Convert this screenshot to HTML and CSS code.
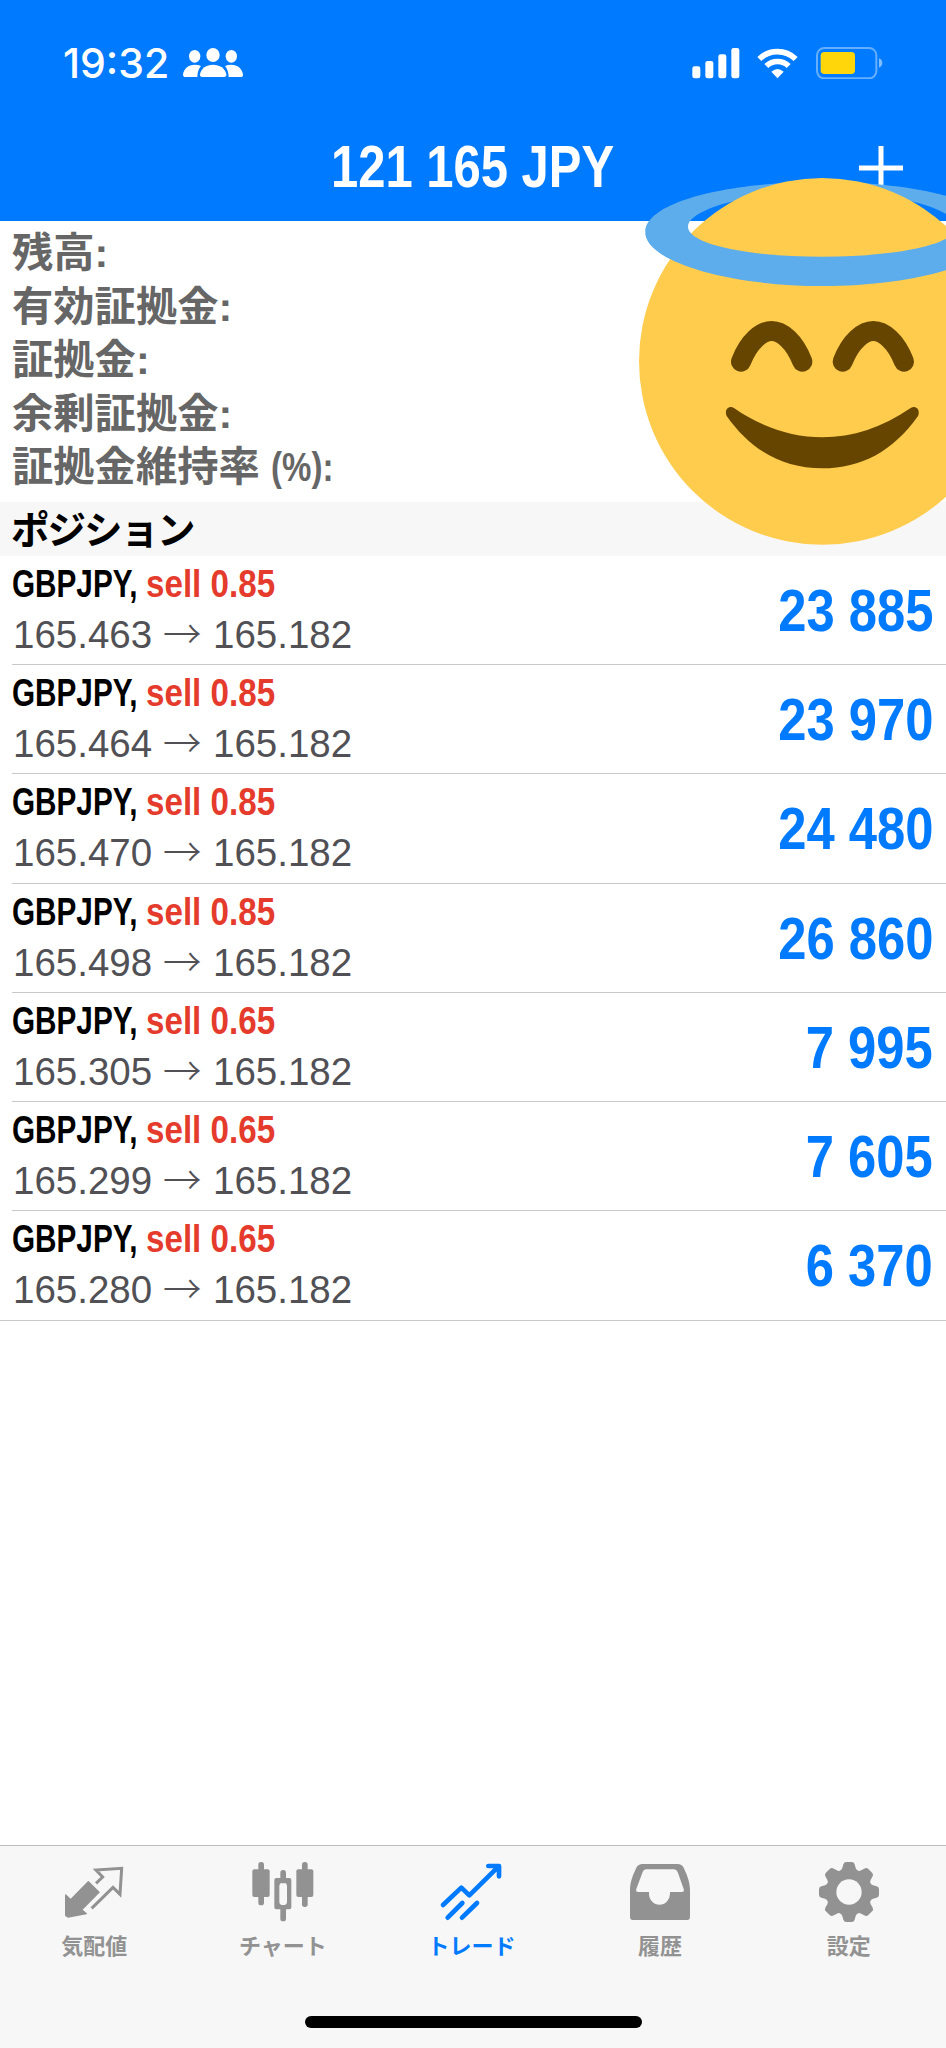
FILE: index.html
```html
<!DOCTYPE html>
<html lang="ja">
<head>
    <meta charset="UTF-8">
    <meta name="viewport" content="width=device-width, initial-scale=1.0">
    <title>トレード</title>
    <link rel="stylesheet" href="styles.css">
</head>
<body>
    <header class="header">
        <div class="status-bar">
            <span class="time">19:32</span>
            <svg class="people" width="61" height="30" viewBox="0 0 183 90" fill="#fff">
                <ellipse cx="35" cy="25" rx="17" ry="19"/>
                <ellipse cx="145" cy="25" rx="17" ry="19"/>
                <ellipse cx="90" cy="21" rx="20" ry="21"/>
                <path d="M8 87Q0 87 0 80C2 62 16 50 35 50Q46 50 54 54Q44 65 43 87Z"/>
                <path d="M172 87Q181 87 180 80C178 62 164 50 145 50Q134 50 126 54Q136 65 137 87Z"/>
                <path d="M58 87Q50 87 51 79C54 61 70 50 90 50S127 61 130 79Q131 87 123 87Z"/>
            </svg>
            <svg class="signal" width="48" height="31" viewBox="0 0 144 93" fill="#fff">
                <rect x="1" y="55" width="24" height="36" rx="7"/>
                <rect x="40" y="39" width="24" height="52" rx="7"/>
                <rect x="79" y="19" width="24" height="72" rx="7"/>
                <rect x="118" y="0" width="24" height="91" rx="7"/>
            </svg>
            <svg class="wifi" width="41" height="31" viewBox="0 0 123 93" fill="none" stroke="#fff" stroke-width="17">
                <path d="M7 33A78 78 0 0 1 116 33"/>
                <path d="M28 54A48 48 0 0 1 95 54"/>
                <path d="M61.500 91L43 71Q61.500 55 80 71Z" fill="#fff" stroke="none"/>
            </svg>
            <svg class="battery" width="67" height="32" viewBox="0 0 201 96">
                <rect x="3" y="3" width="178" height="91" rx="22" fill="none" stroke="#fff" stroke-opacity=".4" stroke-width="6"/>
                <rect x="14" y="15" width="103" height="66" rx="11" fill="#ffd60a"/>
                <path d="M189 34Q199 38 199 48T189 62Z" fill="#fff" fill-opacity=".5"/>
            </svg>
        </div>
        <div class="title-bar">
            <h1 class="title"><span>121 165 JPY</span></h1>
            <svg class="plus" width="44" height="44" viewBox="0 0 44 44" stroke="#fff" stroke-width="5">
                <path d="M0 22H44M22 0V44"/>
            </svg>
        </div>
    </header>

    <section class="account">
        <p>残高:</p>
        <p>有効証拠金:</p>
        <p>証拠金:</p>
        <p>余剰証拠金:</p>
        <p>証拠金維持率 <span class="percent">(%):</span></p>
    </section>

    <h2 class="section-title">ポジション</h2>

    <main class="positions">
        <div class="position">
            <div class="info">
                <div class="deal"><span class="symbol">GBPJPY,</span><span class="side">sell 0.85</span></div>
                <div class="prices"><span class="open">165.463</span><span class="arrow">→</span><span>165.182</span></div>
            </div>
            <div class="profit">23 885</div>
        </div>
        <div class="position">
            <div class="info">
                <div class="deal"><span class="symbol">GBPJPY,</span><span class="side">sell 0.85</span></div>
                <div class="prices"><span class="open">165.464</span><span class="arrow">→</span><span>165.182</span></div>
            </div>
            <div class="profit">23 970</div>
        </div>
        <div class="position">
            <div class="info">
                <div class="deal"><span class="symbol">GBPJPY,</span><span class="side">sell 0.85</span></div>
                <div class="prices"><span class="open">165.470</span><span class="arrow">→</span><span>165.182</span></div>
            </div>
            <div class="profit">24 480</div>
        </div>
        <div class="position">
            <div class="info">
                <div class="deal"><span class="symbol">GBPJPY,</span><span class="side">sell 0.85</span></div>
                <div class="prices"><span class="open">165.498</span><span class="arrow">→</span><span>165.182</span></div>
            </div>
            <div class="profit">26 860</div>
        </div>
        <div class="position">
            <div class="info">
                <div class="deal"><span class="symbol">GBPJPY,</span><span class="side">sell 0.65</span></div>
                <div class="prices"><span class="open">165.305</span><span class="arrow">→</span><span>165.182</span></div>
            </div>
            <div class="profit">7 995</div>
        </div>
        <div class="position">
            <div class="info">
                <div class="deal"><span class="symbol">GBPJPY,</span><span class="side">sell 0.65</span></div>
                <div class="prices"><span class="open">165.299</span><span class="arrow">→</span><span>165.182</span></div>
            </div>
            <div class="profit">7 605</div>
        </div>
        <div class="position">
            <div class="info">
                <div class="deal"><span class="symbol">GBPJPY,</span><span class="side">sell 0.65</span></div>
                <div class="prices"><span class="open">165.280</span><span class="arrow">→</span><span>165.182</span></div>
            </div>
            <div class="profit">6 370</div>
        </div>
    </main>

    <footer class="footer">
        <nav class="tabs">
            <a class="tab">
                <svg viewBox="0 0 180 180">
                    <path fill="currentColor" stroke="currentColor" stroke-width="4" stroke-linejoin="round" d="M5 99L20 113L73 59L105 91L53 143L67 155L12 165L5 160Z"/>
                    <path fill="none" stroke="currentColor" stroke-width="9" d="M96 64L116 45L96 24L173 19L168 97L147 76L83 139"/>
                </svg>
                気配値
            </a>
            <a class="tab">
                <svg viewBox="0 0 180 180" fill="currentColor">
                    <rect x="-2" y="22" width="52" height="83" rx="6"/>
                    <rect x="16" y="0" width="17" height="130" rx="8"/>
                    <rect x="130" y="22" width="51" height="83" rx="6"/>
                    <rect x="147" y="0" width="17" height="135" rx="8"/>
                    <rect x="82" y="24" width="17" height="40" rx="8"/>
                    <rect x="82" y="130" width="17" height="48" rx="8"/>
                    <path fill-rule="evenodd" d="M70 48H109Q115 48 115 54V136Q115 142 109 142H70Q64 142 64 136V54Q64 48 70 48ZM90.500 62Q79 62 79 72V119Q79 129 90.500 129T102 119V72Q102 62 90.500 62Z"/>
                </svg>
                チャート
            </a>
            <a class="tab active">
                <svg viewBox="0 0 180 180" fill="none" stroke="currentColor" stroke-width="14" stroke-linecap="round" stroke-linejoin="round">
                    <path d="M6 129L61 77L85 100L172 14M142 12H174V43"/>
                    <path d="M20 167L64 123M63 167L108 123"/>
                </svg>
                トレード
            </a>
            <a class="tab">
                <svg viewBox="0 0 180 180" fill="currentColor">
                    <path fill-rule="evenodd" d="M0 164V86C0 58 10 36 19 17Q25 6 37 6H143Q155 6 161 17C170 36 180 58 180 86V164Q180 174 170 174H10Q0 174 0 164ZM48 22Q41 22 38 30L19 81Q16 90 25 90H57V95A31.500 33 0 0 0 120 95V90H155Q164 90 161 81L143 30Q140 22 132 22Z"/>
                </svg>
                履歴
            </a>
            <a class="tab">
                <svg viewBox="0 0 180 180">
                    <defs>
                        <path id="tooth" d="M60 28Q68 25 70 18L73 7Q75 0 82 0H98Q105 0 107 7L110 18Q112 25 120 28L110 60H70Z"/>
                    </defs>
                    <g fill="currentColor">
                        <circle cx="90" cy="90" r="67"/>
                        <use href="#tooth"/>
                        <use href="#tooth" transform="rotate(45 90 90)"/>
                        <use href="#tooth" transform="rotate(90 90 90)"/>
                        <use href="#tooth" transform="rotate(135 90 90)"/>
                        <use href="#tooth" transform="rotate(180 90 90)"/>
                        <use href="#tooth" transform="rotate(225 90 90)"/>
                        <use href="#tooth" transform="rotate(270 90 90)"/>
                        <use href="#tooth" transform="rotate(315 90 90)"/>
                    </g>
                    <circle cx="90" cy="90" r="38" fill="#f7f7f7"/>
                </svg>
                設定
            </a>
        </nav>
        <div class="home-indicator"></div>
    </footer>

    <!-- sticker over the account values -->
    <svg class="sticker" viewBox="0 0 978 1200">
        <path id="halo" fill="#5dadec" fill-rule="evenodd" d="M76 216C76 130 310 66 607 66S1138 130 1138 216S900 378 607 378S76 302 76 216ZM204 200C204 250 370 290 607 290S1010 250 1010 200S830 94 607 94S204 150 204 200Z"/>
        <circle cx="607" cy="604" r="550" fill="#ffcc4d"/>
        <clipPath id="front"><rect x="0" y="220" width="978" height="200"/></clipPath>
        <use href="#halo" clip-path="url(#front)"/>
        <g fill="none" stroke="#664500" stroke-width="60" stroke-linecap="round">
            <path d="M363 605C387 543 425 513 455 513S523 543 547 605"/>
            <path d="M668 605C692 543 730 513 760 513S828 543 852 605"/>
        </g>
        <path fill="#664500" d="M342 744C510 861 704 861 872 744C888 735 902 750 894 768C819 874 724 925 607 925S395 874 320 768C312 750 326 735 342 744Z"/>
    </svg>
</body>
</html>
```
FILE: styles.css
```css
* {
    box-sizing: border-box;
}

body {
    margin: 0;
    width: 946px;
    height: 2048px;
    display: flex;
    flex-direction: column;
    position: relative;
    overflow: hidden;
    background-color: #fff;
    font-family: "Liberation Sans", "Noto Sans CJK JP", sans-serif;
}

h1, h2, p {
    margin: 0;
}

svg {
    display: block;
    flex-shrink: 0;
}

.header {
    height: 221px;
    background-color: #007aff;
    color: #fff;
}

.status-bar {
    height: 126px;
    padding: 0 63px;
    display: flex;
    align-items: center;
}

.time {
    width: 120px;
    font-family: Inter, sans-serif;
    font-size: 41px;
    font-weight: 500;
    white-space: nowrap;
}

.signal {
    margin-left: auto;
}

.wifi {
    margin-left: 17px;
}

.battery {
    margin-left: 18px;
}

.title-bar {
    height: 83px;
    padding: 0 43px;
    display: grid;
    grid-template-columns: 44px 1fr 44px;
    align-items: center;
}

.title {
    grid-column: 2;
    text-align: center;
    font-size: 59px;
    line-height: 83px;
    white-space: nowrap;
}

.title span {
    display: inline-block;
    transform: scaleX(.83);
}

.account {
    height: 281px;
    padding: 6px 12px 0;
    color: #666;
    font-size: 41.300px;
    font-weight: 700;
}

.account p {
    height: 53.500px;
    line-height: 53.500px;
    white-space: nowrap;
}

.percent {
    display: inline-block;
    transform: scaleX(.8);
    transform-origin: left;
}

.section-title {
    height: 54px;
    padding-left: 11px;
    background-color: #f7f7f7;
    color: #000;
    font-size: 38.500px;
    line-height: 57px;
    letter-spacing: -2px;
}

.position {
    height: 109.200px;
    margin-left: 12px;
    padding-right: 13px;
    display: flex;
    justify-content: space-between;
    border-bottom: 1px solid #c8c7cc;
}

.position:last-child {
    height: 110px;
    margin-left: 0;
    padding-left: 12px;
}

.deal {
    display: flex;
    height: 53px;
    font-size: 39.500px;
    font-weight: 700;
    line-height: 55px;
    white-space: nowrap;
}

.symbol {
    width: 134px;
    transform: scaleX(.752);
    transform-origin: left;
}

.side {
    color: #e53b2c;
    transform: scaleX(.84);
    transform-origin: left;
}

.prices {
    display: flex;
    height: 50px;
    padding-left: 1px;
    color: #505055;
    font-size: 38.500px;
    line-height: 51px;
}

.open {
    width: 150px;
}

.arrow {
    width: 50px;
    line-height: 45px;
    font-weight: 300;
    font-family: "Noto Sans CJK JP", sans-serif;
}

.profit {
    color: #007aff;
    font-size: 59px;
    font-weight: 700;
    line-height: 111px;
    white-space: nowrap;
    transform: scaleX(.86);
    transform-origin: right;
}

.footer {
    height: 203px;
    margin-top: auto;
    border-top: 1px solid #bcbcbc;
    background-color: #f7f7f7;
}

.tabs {
    display: flex;
    height: 170px;
    padding: 16px 3px 0 0;
}

.tab {
    flex: 1;
    display: flex;
    flex-direction: column;
    align-items: center;
    color: #929292;
    font-size: 22px;
    font-weight: 700;
    line-height: 34px;
}

.tab svg {
    width: 60px;
    height: 60px;
    margin-bottom: 8px;
    overflow: visible;
}

.tab.active {
    color: #007aff;
}

.home-indicator {
    width: 337px;
    height: 12px;
    margin: 0 auto;
    border-radius: 6px;
    background-color: #000;
}

.sticker {
    position: absolute;
    top: 160px;
    left: 620px;
    width: 326px;
    height: 400px;
}
```
